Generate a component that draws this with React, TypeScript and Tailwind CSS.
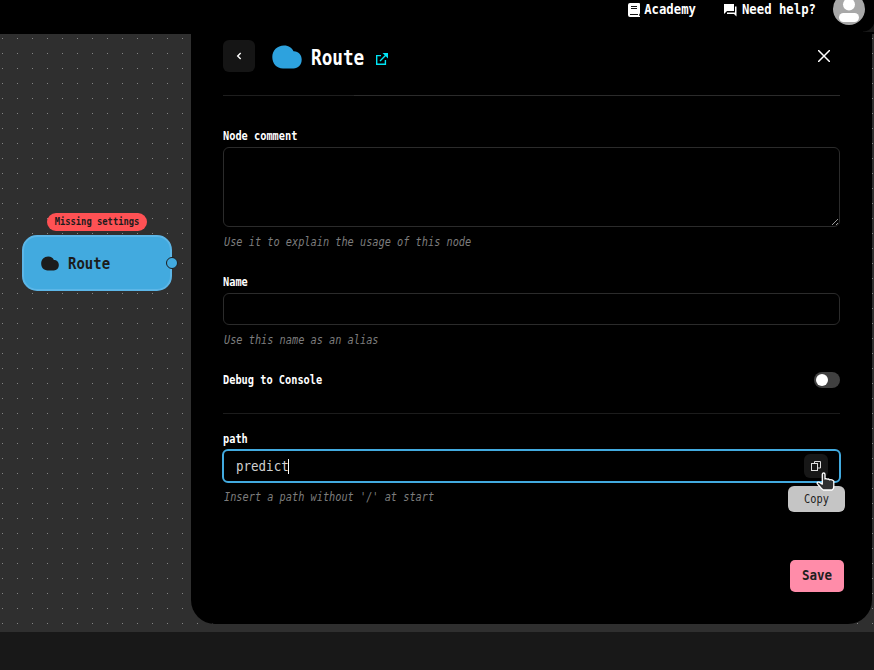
import React from "react";

type TextProps = { children: React.ReactNode; className?: string };

// Monospace text stretched vertically to give narrow letterforms.
function Mono({ children, className = "" }: TextProps) {
  return (
    <span className={`inline-block scale-y-[1.12] whitespace-pre ${className}`}>{children}</span>
  );
}

function Label({ children }: TextProps) {
  return (
    <div className="h-4 text-[10.3px] leading-4 font-bold text-white">
      <Mono>{children}</Mono>
    </div>
  );
}

function Hint({ children }: TextProps) {
  return (
    <div className="h-4 text-[10.27px] leading-4 text-[#7d7d7d] italic">
      <Mono>{children}</Mono>
    </div>
  );
}

function Cloud({ className }: { className: string }) {
  return (
    <svg viewBox="0 0 30 24" className={className} fill="currentColor">
      <path d="M12 0.5C17 0.5 20 3 21.5 6.2C26.5 6 29.7 9.8 29.7 14.5C29.7 20 26 23.5 21.5 23.5H11C4.5 23.5 0.3 18.5 0.3 12C0.3 5.5 5.2 0.5 12 0.5Z" />
    </svg>
  );
}

function Header() {
  return (
    <header className="relative flex h-[34px] items-start justify-end bg-black text-white">
      <div className="flex h-5 items-center text-[12.3px] leading-[18px] font-bold">
        <svg viewBox="0 0 14 16" className="mr-[3px] h-4 w-[14px]">
          <path fill="#fff" d="M3 1H12Q13 1 13 2V11Q13 12 12.3 12V14H13V15H3Q1 15 1 13V3Q1 1 3 1Z" />
          <path stroke="#111" fill="none" d="M4 4.5H10M4 6.5H10M3 12.5H11" />
        </svg>
        <Mono>Academy</Mono>
        <svg viewBox="0 0 14 14" className="mr-[5px] ml-[27px] h-[14px] w-[14px]">
          <path fill="#fff" d="M1 1H11V8H4L1 11ZM12 3.5H13.5V13.5L11 11H4V9.5H12Z" />
        </svg>
        <Mono>Need help?</Mono>
      </div>
      <div className="absolute right-0 bottom-[2px] h-3 w-[11px] bg-[radial-gradient(circle_at_0_0,#000_11px,#171717_12px)]" />
      <div className="mt-[-7px] mr-[9px] ml-[17px] h-8 w-8 overflow-hidden rounded-full bg-[#a8a8a8]">
        <svg viewBox="0 0 32 32" className="h-8 w-8" fill="#fff">
          <circle cx="16" cy="11.5" r="6" />
          <rect x="6" y="20" width="20" height="9" rx="4.5" />
        </svg>
      </div>
    </header>
  );
}

function RouteNode() {
  return (
    <div className="absolute top-[179px] left-[22px] flex w-[150px] flex-col items-center">
      <div className="h-[18px] w-[100px] rounded-full bg-[#ff5154] text-center text-[8.8px] leading-[18px] font-bold text-[#1c1c1c]">
        <Mono>Missing settings</Mono>
      </div>
      <div className="relative mt-1 flex h-14 w-full items-center rounded-[15px] border-2 border-[#5cb6e7] bg-[#42aadf] pl-[17px] text-[#1c1c1c]">
        <Cloud className="mt-px h-[15px] w-[18px]" />
        <span className="-mt-px ml-[9px] text-[14px] leading-5 font-bold">
          <Mono className="scale-y-[1.2]">Route</Mono>
        </span>
        <span className="absolute top-5 -right-2 h-3 w-3 rounded-full border border-[#1c1c1c] bg-[#42aadf]" />
      </div>
    </div>
  );
}

function Cursor() {
  return (
    <svg viewBox="0 0 20 20" className="absolute top-[21px] right-[3px] z-20 h-5 w-5">
      <path
        d="M6.3 2.6Q6.3 1 7.7 1Q9 1 9 2.6V7Q10 6.2 11.2 7.2Q12.6 6.6 13.6 7.9Q15.2 7.2 17.8 9V13.5Q17.8 17.5 15.8 18H7.3Q5.3 16.8 3.5 14.2L1.2 11.6Q.8 9.8 3.2 10.2L6.3 12.1Z"
        fill="#303030"
        stroke="#fff"
        strokeWidth="1.3"
        strokeLinejoin="round"
      />
    </svg>
  );
}

function SettingsPanel() {
  return (
    <section className="absolute top-0 left-[191px] flex h-[590px] w-[681px] flex-col rounded-b-[24px] bg-black pr-8 pl-8">
      <div className="flex h-[61px] items-start pt-[6px]">
        <button className="flex h-8 w-8 items-center justify-center rounded-[6px] bg-[#151515]">
          <svg viewBox="0 0 6 8" className="h-2 w-[6px]">
            <path d="M4.7 1L1.7 4L4.7 7" stroke="#fff" strokeWidth="1.4" fill="none" />
          </svg>
        </button>
        <Cloud className="mt-[5px] ml-[17px] h-6 w-[30px] text-[#2da2de]" />
        <h1 className="ml-[9px] pt-[6px] text-[17.7px] leading-6 font-bold text-white">
          <Mono className="scale-y-[1.15]">Route</Mono>
        </h1>
        <svg viewBox="0 0 12 12" className="mt-[13px] ml-3 h-3 w-3">
          <path d="M5 2.6H.7V11.3H9.4V7M4 8L10 2" stroke="#00e5f5" strokeWidth="1.4" fill="none" />
          <path d="M6.5 0H12V5.5Z" fill="#00e5f5" />
        </svg>
        <svg viewBox="0 0 12 12" className="mt-[10px] mr-[10px] ml-auto h-3 w-3">
          <path d="M0 0L12 12M12 0L0 12" stroke="#fff" strokeWidth="1.5" />
        </svg>
      </div>
      <div className="flex h-px bg-[#2b2b2b]">
        <div className="w-[131px] bg-[#1e1e1e]" />
      </div>

      <div className="mt-8">
        <Label>Node comment</Label>
        <textarea className="mt-[3px] block h-20 w-[617px] rounded-[6px] border border-[#2b2b2b] bg-black" />
        <div className="mt-[7px] pl-px">
          <Hint>Use it to explain the usage of this node</Hint>
        </div>
      </div>

      <div className="mt-6">
        <Label>Name</Label>
        <div className="mt-[3px] h-8 rounded-[6px] border border-[#2b2b2b]" />
        <div className="mt-[7px] pl-px">
          <Hint>Use this name as an alias</Hint>
        </div>
      </div>

      <div className="mt-6 flex h-[42px] items-start justify-between border-b border-[#1c1c1c]">
        <Label>Debug to Console</Label>
        <div className="h-4 w-[26px] rounded-full bg-[#404040] p-[2px]">
          <div className="h-3 w-3 rounded-full bg-white" />
        </div>
      </div>

      <div className="mt-[17px]">
        <Label>path</Label>
        <div className="relative mt-[2px] -mr-px -ml-px flex h-[34px] items-center rounded-[6px] border-2 border-[#42aadf] pr-[11px] pl-3 text-[12.5px] leading-5 text-[#d0d0d0]">
          <span className="pt-[2px]">
            <Mono>predict</Mono>
          </span>
          <span className="-ml-px h-[15px] w-px bg-white" />
          <button className="ml-auto flex h-6 w-6 items-center justify-center rounded-[6px] bg-[#171717]">
            <svg viewBox="0 0 10 10" className="h-[10px] w-[10px]">
              <path d="M3.5 3V.5H9.5V7H7" stroke="#ddd" fill="none" />
              <rect x=".5" y="2.5" width="6" height="7" stroke="#ddd" fill="none" />
            </svg>
          </button>
          <Cursor />
          <div className="absolute top-[35px] -right-[6px] h-[26px] w-[57px] rounded-[6px] bg-[#c5c5c5] text-center text-[10.3px] leading-[26px] text-[#202020]">
            <Mono>Copy</Mono>
          </div>
        </div>
        <div className="mt-[6px] pl-px">
          <Hint>Insert a path without '/' at start</Hint>
        </div>
      </div>

      <button className="mt-[55px] -mr-1 h-8 w-[54px] self-end rounded-[5px] bg-[#ff8ca9] text-[12.5px] leading-8 font-bold text-[#202020]">
        <Mono>Save</Mono>
      </button>
    </section>
  );
}

export default function App() {
  return (
    <div className="flex h-[670px] w-[874px] flex-col overflow-hidden bg-[#181818] font-['DejaVu_Sans_Mono',monospace]">
      <Header />
      <main className="relative h-[598px] shrink-0 bg-[#2f2f2f] bg-[linear-gradient(90deg,#2f2f2f_14px,transparent_14px),linear-gradient(#2f2f2f_14px,#858585_14px)] bg-[size:15px_15px] bg-[position:3px_5px]">
        <RouteNode />
        <SettingsPanel />
      </main>
    </div>
  );
}
